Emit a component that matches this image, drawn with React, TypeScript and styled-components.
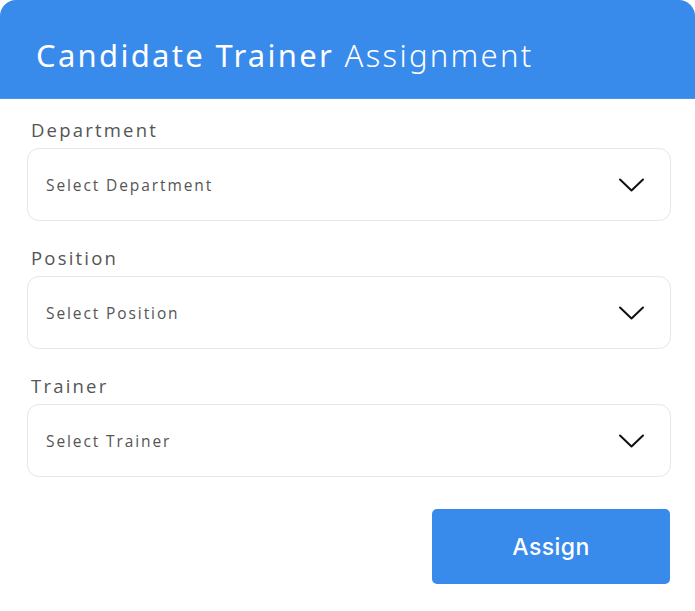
import styled, { createGlobalStyle } from "styled-components";

const GlobalStyle = createGlobalStyle`
  html, body {
    margin: 0;
    padding: 0;
    background: #ffffff;
  }
  * {
    box-sizing: border-box;
  }
`;

/* CARD */

const Card = styled.div`
  width: 695px;
  height: 611px;
  background: #ffffff;
  display: flex;
  flex-direction: column;
`;

const Header = styled.header`
  flex-shrink: 0;
  height: 99px;
  background: #388aeb;
  border-radius: 16px 16px 0 0;
  display: flex;
  align-items: center;
  padding: 12px 36px 0;
  border-bottom: 1px solid #4c97ee;
`;

const Title = styled.h1`
  margin: 0;
  color: #ffffff;
  font-family: "Noto Sans", sans-serif;
  font-size: 31px;
  font-weight: 400;
  letter-spacing: 2.3px;
  line-height: 1;

  span {
    font-weight: 300;
  }
`;

/* FORM */

const Form = styled.div`
  display: flex;
  flex-direction: column;
  gap: 25px;
  padding: 19px 24px 0 27px;
`;

const Field = styled.div`
  display: flex;
  flex-direction: column;
  gap: 6px;
`;

const Label = styled.label`
  padding-left: 4px;
  color: #555555;
  font-family: "Open Sans", sans-serif;
  font-size: 18.5px;
  font-weight: 500;
  letter-spacing: 2.2px;
  line-height: 24px;
`;

const SelectBox = styled.div`
  height: 73px;
  border: 1px solid #e6e6e6;
  border-radius: 12px;
  display: flex;
  align-items: center;
  justify-content: space-between;
  padding: 0 26px 0 18px;
  background: #ffffff;
`;

const Placeholder = styled.span`
  color: #555555;
  font-family: "Open Sans", sans-serif;
  font-size: 15.5px;
  font-weight: 500;
  letter-spacing: 1.9px;
`;

const Chevron = () => (
  <svg width="25" height="14" viewBox="0 0 25 14" fill="none">
    <path d="M1 1.5L12.5 12.5L24 1.5" stroke="#111111" strokeWidth="2" strokeLinecap="round" strokeLinejoin="round" />
  </svg>
);

/* ACTIONS */

const Actions = styled.div`
  display: flex;
  justify-content: flex-end;
  padding: 32px 25px 0 0;
`;

const AssignButton = styled.button`
  width: 238px;
  height: 75px;
  border: none;
  border-radius: 5px;
  background: #388aeb;
  color: #ffffff;
  font-family: Inter, sans-serif;
  font-size: 23px;
  font-weight: 500;
  letter-spacing: 0.4px;
  cursor: pointer;
`;

/* DATA */

const fields = [
  { label: "Department", placeholder: "Select Department" },
  { label: "Position", placeholder: "Select Position" },
  { label: "Trainer", placeholder: "Select Trainer" },
];

/* COMPONENT */

const App = () => {
  return (
    <>
      <GlobalStyle />
      <Card>
        <Header>
          <Title>
            Candidate Trainer <span>Assignment</span>
          </Title>
        </Header>

        <Form>
          {fields.map((f) => (
            <Field key={f.label}>
              <Label>{f.label}</Label>
              <SelectBox>
                <Placeholder>{f.placeholder}</Placeholder>
                <Chevron />
              </SelectBox>
            </Field>
          ))}
        </Form>

        <Actions>
          <AssignButton>Assign</AssignButton>
        </Actions>
      </Card>
    </>
  );
};

export default App;
